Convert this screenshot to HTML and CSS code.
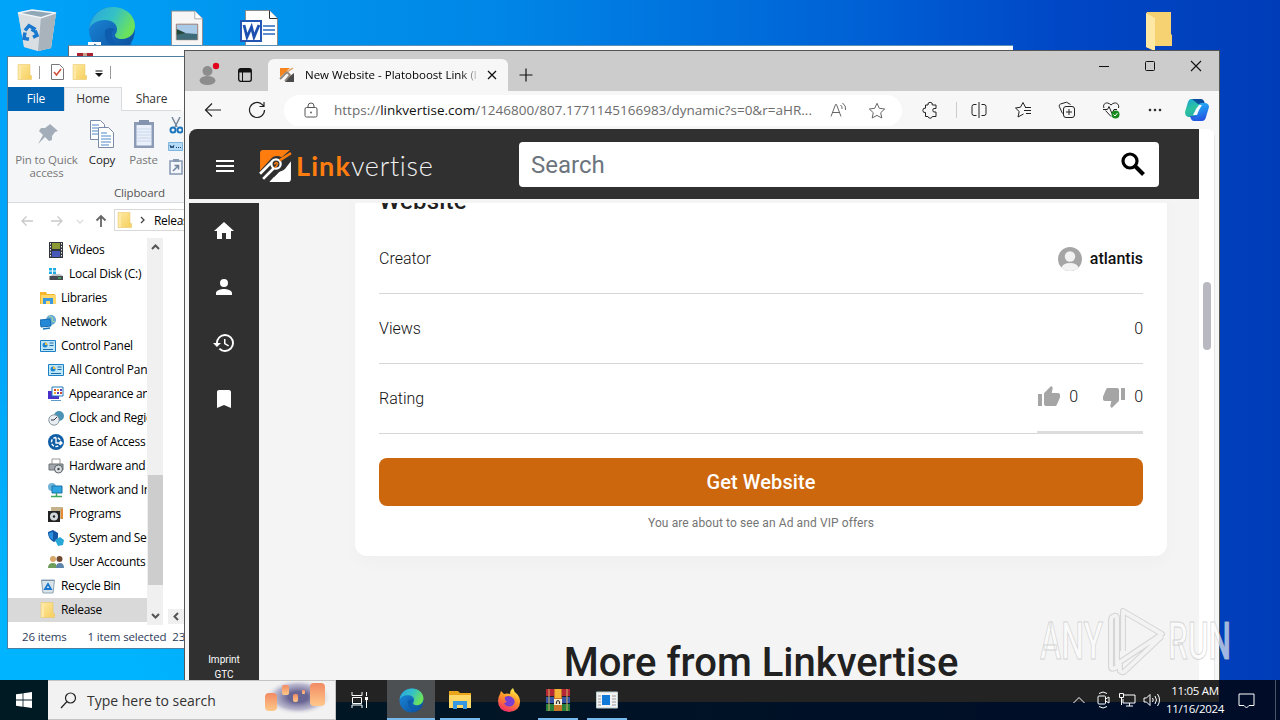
FILE: index.html
```html
<!DOCTYPE html>
<html lang="en">
<head>
    <meta charset="UTF-8">
    <meta name="viewport" content="width=device-width, initial-scale=1.0">
    <title>New Website - Platoboost Link</title>
    <link rel="stylesheet" href="styles.css">
</head>
<body>
    <svg class="defs" width="0" height="0">
        <defs>
            <linearGradient id="fold" x1="0" y1="0" x2="1" y2="1"><stop offset="0" stop-color="#ffe9a2"/><stop offset="1" stop-color="#f5cf5c"/></linearGradient>
            <linearGradient id="edgeTop" x1="0" y1="0" x2="1" y2="0.4"><stop offset="0" stop-color="#2aa5e0"/><stop offset="0.55" stop-color="#35c1c6"/><stop offset="1" stop-color="#6be25c"/></linearGradient>
            <linearGradient id="edgeLow" x1="0" y1="0" x2="1" y2="1"><stop offset="0" stop-color="#1b8de0"/><stop offset="1" stop-color="#0c4a96"/></linearGradient>
            <linearGradient id="fox" x1="0.7" y1="0" x2="0.3" y2="1"><stop offset="0" stop-color="#fff04a"/><stop offset="0.45" stop-color="#ff9328"/><stop offset="1" stop-color="#f0286a"/></linearGradient>
            <linearGradient id="cop1" x1="0" y1="0" x2="0.4" y2="1"><stop offset="0" stop-color="#1aa0d8"/><stop offset="0.6" stop-color="#2cc3a0"/><stop offset="1" stop-color="#2ab0a8"/></linearGradient>
            <linearGradient id="cop2" x1="0" y1="0" x2="0.3" y2="1"><stop offset="0" stop-color="#2cb5f5"/><stop offset="0.5" stop-color="#1f8cf0"/><stop offset="1" stop-color="#2456e0"/></linearGradient>
        </defs>
        <symbol id="folder" viewBox="0 0 16 16">
            <path d="M1 .5h12v11h1.500v4H1z" fill="url(#fold)"/>
            <path d="M1 .5l3 1.500v13.500H1z" fill="#ffe9a6"/>
            <path d="M1 .5h12v11h1.500v4H1z" fill="none" stroke="#e6c260" stroke-width=".5"/>
        </symbol>
        <symbol id="edge" viewBox="0 0 48 48">
            <circle cx="24" cy="24" r="23" fill="url(#edgeLow)"/>
            <path d="M1 23C3 9 13 1 25 1c13 0 22 9 22 19 0 8-6 13-13 13-5 0-7-2-7-4 0-1 2-2 2-6 0-5-5-9-12-9C9 14 3 18 1 23z" fill="url(#edgeTop)"/>
            <path d="M17 25c-1 9 5 17 14 18 5 0 9-1 13-6-9 4-18 1-20-5-1-4 0-7 3-9-4-2-9-1-10 2z" fill="#0d5cae"/>
        </symbol>
        <symbol id="linkv" viewBox="0 0 32 33">
            <path d="M1 4q0-3 3-3h26l-8 7q-6-3-10 1L1 21z" fill="#ff7d0f"/>
            <path d="M31 12v17q0 3-3 3H10l9-10q5 0 8-5z" fill="#fff"/>
            <path d="M1 24l12-12M4 29l11-11" stroke="#fff" stroke-width="2.600"/>
            <circle cx="16.500" cy="14.500" r="4.500" fill="#303030" stroke="#fff" stroke-width="2.200"/>
            <path d="M20 11l11-7" stroke="#ff7d0f" stroke-width="2.400"/>
            <path d="M15 15q1-3 3-1 0 2-3 4" fill="none" stroke="#ff7d0f" stroke-width="1.500"/>
            <path d="M14 27l9-9 8-9" fill="none" stroke="#303030" stroke-width="1.300"/>
        </symbol>
        <symbol id="panel" viewBox="0 0 16 16">
            <path d="M.5 2.500h15v11H.5z" fill="#bfe7fa" stroke="#1d7fc4"/>
            <circle cx="5" cy="7" r="2.500" fill="#1d86d0"/><path d="M5 7V4.500A2.500 2.500 0 0 1 7.500 7z" fill="#f7c33c"/>
            <path d="M9.500 5h4M9.500 7.500h4M3 11.500h10" stroke="#1e6aa5"/>
        </symbol>
        <symbol id="bin" viewBox="0 0 40 44">
            <path d="M1 4l14-3 24 3-5 36-13 3-14-4z" fill="#c6ced4"/>
            <path d="M1 4l20 5 18-5-5 36-13 3-14-4z" fill="#dde2e5" opacity=".8"/>
            <path d="M24 8l15-4-5 36-13 3z" fill="#a9b3bc"/>
            <path d="M1 4l14-3 24 3-15 5z" fill="#8fa7b7" stroke="#f1f4f6" stroke-width="1.500"/>
            <path d="M8 22l4-5 5 3-2 3M18 22l2 5-4 2M12 31l-5-1 1-6" fill="none" stroke="#1a78cf" stroke-width="3.500"/>
        </symbol>
    </svg>

    <div class="desktop">
        <svg class="desk-icon bin" viewBox="0 0 40 44" preserveAspectRatio="none"><use href="#bin"/></svg>
        <svg class="desk-icon edge" viewBox="0 0 48 48"><use href="#edge"/><path d="M0 36h13v12H0z" fill="#fff"/><path d="M4 45q0-4 5-5M6 38.500l3.500 1.500-2 3" fill="none" stroke="#1a66b8" stroke-width="1.500"/></svg>
        <svg class="desk-icon picture" viewBox="0 0 34 40">
            <path d="M.5.500h24l8 8V40H.5z" fill="#f6f6f6" stroke="#8c8c8c"/><path d="M24.500.500v8h8" fill="#fff" stroke="#aaa"/>
            <path d="M5.500 14h22v16h-22z" fill="#a9cbe8" stroke="#9b7c72"/><path d="M6 21l7 2 14 1v6H6z" fill="#3e6b78"/><path d="M6 19l9 4-9 2z" fill="#24483a"/>
        </svg>
        <svg class="desk-icon word" viewBox="0 0 38 40">
            <path d="M5.500.500h24l8 8V40h-32z" fill="#fff" stroke="#8c8c8c"/><path d="M29.500.500v8h8" fill="#fff" stroke="#333"/>
            <path d="M23 16h12M23 20h12M23 24h12" stroke="#2b6ac0" stroke-width="1.500"/>
            <path d="M1 11h20v20H1z" fill="#fff" stroke="#2255b4" stroke-width="2"/>
            <path d="M4 15l3 12 4.500-10L14 27l5-12" fill="none" stroke="#1d4fb0" stroke-width="2.800"/>
        </svg>
        <svg class="desk-icon files" viewBox="0 0 28 40"><path d="M2 0h24v22l1 1v11H10v5L1 35V2z" fill="#f6d272"/><path d="M1 1l9 5v33l-9-4z" fill="#ffe8a4"/></svg>

        <div class="window rar-window">
            <svg width="16" height="5" viewBox="0 0 16 5"><path d="M0 0h16v5H0z" fill="#a8232d"/><path d="M6 0h4v5H6z" fill="#c9a08b"/></svg>
        </div>

        <div class="window explorer">
            <div class="quick-bar">
                <svg width="16" height="16"><use href="#folder"/></svg>
                <i class="sep"></i>
                <svg class="check" width="13" height="16" viewBox="0 0 13 16"><path d="M.5.500h8l4 4v11H.5z" fill="#fff" stroke="#777"/><path d="M3 8l2.500 3L10 5" fill="none" stroke="#d0523a" stroke-width="1.600"/></svg>
                <svg width="16" height="16"><use href="#folder"/></svg>
                <svg class="caret" width="8" height="7" viewBox="0 0 8 7"><path d="M.5 1h7" stroke="#111"/><path d="M0 3h8L4 7z" fill="#111"/></svg>
                <i class="sep"></i>
            </div>
            <div class="tabs">
                <span class="file">File</span>
                <span class="home">Home</span>
                <span class="share">Share</span>
            </div>
            <div class="ribbon">
                <div class="tools">
                    <div class="tool pin">
                        <svg width="30" height="34" viewBox="0 0 30 34"><path d="M18 7l8 7-3 1-3 4 0 4-3 1-4-4-7 7 5-9-4-4 2-3 4 0 4-3z" fill="#a3acb9"/></svg>
                        <span>Pin to Quick<br>access</span>
                    </div>
                    <div class="tool copy">
                        <svg width="30" height="34" viewBox="0 0 30 34"><g fill="#fff" stroke="#7a8ba8"><path d="M3.500 3.500h10l4 4v15h-14z"/><path d="M11.500 10.500h10l5 5v15h-15z"/></g><path d="M5 8h7M5 11h6M5 14h6M5 17h6M14 16h6M14 19h10M14 22h10M14 25h10M14 28h8" stroke="#4d87c7"/></svg>
                        <span>Copy</span>
                    </div>
                    <div class="tool paste">
                        <svg width="30" height="34" viewBox="0 0 30 34"><path d="M5 5h20v26H5z" fill="#8b9bb6"/><path d="M7.500 8h15v20.500h-15z" fill="#eaf0f9"/><path d="M10 3h10v5H10z" fill="#8493ad"/><path d="M8 12h14M8 15h14M8 18h14M8 21h14M8 24h14" stroke="#c8d6ea"/></svg>
                        <span>Paste</span>
                    </div>
                    <div class="small-tools">
                        <svg width="14" height="17" viewBox="0 0 14 17"><path d="M3 0l5 10M11 0L6 10" stroke="#76889d" stroke-width="1.500"/><circle cx="4" cy="13" r="2.500" fill="none" stroke="#1d76bd" stroke-width="2"/><circle cx="11" cy="13" r="2.500" fill="none" stroke="#1d76bd" stroke-width="2"/></svg>
                        <svg width="15" height="9" viewBox="0 0 15 9"><path d="M.5.500h14v8H.5z" fill="#b4dcf8" stroke="#7fb4dd"/><path d="M2 3l1 3 1-2 1 2 1-3M8 5.500h1M10 5.500h1M12 5.500h1" fill="none" stroke="#1b4770"/></svg>
                        <svg width="14" height="16" viewBox="0 0 14 16"><path d="M1 2h12v13H1z" fill="#f3f6fa" stroke="#8798b2" stroke-width="1.500"/><path d="M4 0h6v3H4z" fill="#8798b2"/><path d="M4 12l5-5M5.500 6.500H9.500v4" fill="none" stroke="#72849d" stroke-width="1.500"/></svg>
                    </div>
                </div>
                <div class="group-name">Clipboard</div>
            </div>
            <div class="address">
                <svg width="72" height="14" viewBox="0 0 72 14" fill="none" stroke="#c9c9c9" stroke-width="1.300"><path d="M13 7H2M6.500 2.500L2 7l4.500 4.500M31 7h11M37.500 2.500L42 7l-4.500 4.500"/><path d="M57 6l3 3 3-3" stroke="#ddd"/></svg>
                <svg class="up" width="12" height="14" viewBox="0 0 12 14"><path d="M6 13V2M1.500 6.500L6 2l4.500 4.500" fill="none" stroke="#666" stroke-width="1.800"/></svg>
                <div class="path">
                    <svg width="16" height="16"><use href="#folder"/></svg>
                    <svg class="chev" width="5" height="8" viewBox="0 0 5 8"><path d="M1 1l3 3-3 3" fill="none" stroke="#444" stroke-width="1.300"/></svg>
                    <span>Release</span>
                </div>
            </div>
            <div class="explorer-main">
                <ul class="tree">
                    <li class="sub"><svg viewBox="0 0 16 16"><path d="M1 0h14v16H1z" fill="#30343b"/><path d="M4 1h8v6H4z" fill="#8b9a35"/><path d="M4 9h8v6H4z" fill="#4858b8"/><path d="M2.500 1v14M13.500 1v14" stroke="#eee" stroke-dasharray="1.500 1.500"/></svg><span>Videos</span></li>
                    <li class="sub"><svg viewBox="0 0 16 16"><path d="M1 2h3v2.500H1zM5 2h3v2.500H5zM1 5.500h3V8H1zM5 5.500h3V8H5z" fill="#19abe2"/><path d="M2 10l3-2h7l3 2z" fill="#bcc3c7"/><path d="M1.500 10H15v4H1.500z" fill="#454b50"/><path d="M10 12h3" stroke="#4be06f"/></svg><span>Local Disk (C:)</span></li>
                    <li><svg viewBox="0 0 16 16"><path d="M0 2h6l1 2h8v10H0z" fill="#f5b62c"/><path d="M1 5h15v9H1z" fill="#ffd76b"/><path d="M3 14V8h10v6h-3v-3H6v3z" fill="#3b9ade"/></svg><span>Libraries</span></li>
                    <li><svg viewBox="0 0 16 16"><circle cx="11" cy="6" r="5" fill="#63a9d3"/><path d="M9 2l4 2-1 3 3 1" stroke="#a9d7a0" fill="none"/><path d="M0 6l10-1 1 7-10 1z" fill="#2589d7" stroke="#146bae"/><path d="M3 15l7-1" stroke="#1a75ba" stroke-width="1.500"/></svg><span>Network</span></li>
                    <li><svg><use href="#panel"/></svg><span>Control Panel</span></li>
                    <li class="sub"><svg><use href="#panel"/></svg><span>All Control Panel Items</span></li>
                    <li class="sub"><svg viewBox="0 0 16 16"><path d="M0 5h11v8H0z" fill="#4731c8"/><path d="M4 1h11v9H4z" fill="#fff" stroke="#2179bc"/><path d="M6 3h2v2H6zM12 6h2v2h-2z" fill="#d4432c"/><path d="M9 3h2v2H9zM6 6h2v2H6z" fill="#f3a52c"/><path d="M12 3h2v2h-2zM9 6h2v2H9z" fill="#5d3bb6"/><path d="M3 14.500h10" stroke="#5d9acb"/></svg><span>Appearance and Personalization</span></li>
                    <li class="sub"><svg viewBox="0 0 16 16"><circle cx="11" cy="6" r="5" fill="#4b93b6"/><circle cx="6" cy="10" r="5.200" fill="#e7edf0" stroke="#8a98a2"/><path d="M6 10l3-3M6 10H3" stroke="#334"/></svg><span>Clock and Region</span></li>
                    <li class="sub"><svg viewBox="0 0 16 16"><circle cx="8" cy="8" r="8" fill="#0f5ea6"/><circle cx="8" cy="8" r="4.500" fill="none" stroke="#fff" stroke-width="1.500" stroke-dasharray="3 1.500"/><path d="M8 4v5h6M12 7l2 2-2 2" fill="none" stroke="#fff" stroke-width="1.300"/></svg><span>Ease of Access</span></li>
                    <li class="sub"><svg viewBox="0 0 16 16"><path d="M4 1h8v6H4z" fill="#fff" stroke="#999"/><path d="M1 6h14v6H1z" fill="#a0a6ab" stroke="#6a7278"/><circle cx="10.500" cy="11" r="4" fill="#d9dee1" stroke="#596066"/><circle cx="10.500" cy="11" r="1.200" fill="#444"/></svg><span>Hardware and Sound</span></li>
                    <li class="sub"><svg viewBox="0 0 16 16"><circle cx="4" cy="5" r="4" fill="#6fb4d8"/><path d="M4 4h10v7H4z" fill="#2fa6e2" stroke="#1971a8"/><path d="M3 14.500h11M8.500 11v3" stroke="#3da85c" stroke-width="1.500"/></svg><span>Network and Internet</span></li>
                    <li class="sub"><svg viewBox="0 0 16 16"><path d="M3 1h12v12H3z" fill="#c4b28c"/><path d="M13 3h2v10h-2z" fill="#e48a35"/><path d="M0 5h12v11H0z" fill="#222"/><circle cx="6" cy="10.500" r="4" fill="#d3d8db"/><circle cx="6" cy="10.500" r="1.200" fill="#222"/></svg><span>Programs</span></li>
                    <li class="sub"><svg viewBox="0 0 16 16"><path d="M0 2l5-2 5 3v4c0 3-2 4-4 5C2 10 0 7 0 2z" fill="#1458a8"/><path d="M1 3l4-1v8C2 8 1 7 1 3z" fill="#2b91df"/><path d="M7 10l5-3 4 3-1 5-5 1z" fill="#29a7d6"/></svg><span>System and Security</span></li>
                    <li class="sub"><svg viewBox="0 0 16 16"><circle cx="5" cy="5" r="3" fill="#d8a667"/><circle cx="11.500" cy="5" r="3" fill="#70482e"/><path d="M0 14q0-5 5-5 4 0 4 5z" fill="#6d9d58"/><path d="M8 14q0-5 4-5t4 5z" fill="#5d84ab"/></svg><span>User Accounts</span></li>
                    <li><svg viewBox="0 0 16 16"><path d="M1.500 2h13L13 15H3z" fill="#d9e3ea" stroke="#8ea3b2"/><path d="M2 2.500h12" stroke="#7b93a5"/><path d="M5 11l3-5 3 5z" fill="none" stroke="#1a78cf" stroke-width="1.800"/></svg><span>Recycle Bin</span></li>
                    <li class="selected"><svg><use href="#folder"/></svg><span>Release</span></li>
                </ul>
                <div class="tree-scroll">
                    <svg width="9" height="6" viewBox="0 0 9 6"><path d="M1 5l3.500-3.500L8 5" fill="none" stroke="#555" stroke-width="2"/></svg>
                    <div class="thumb"></div>
                    <svg width="9" height="6" viewBox="0 0 9 6"><path d="M1 1l3.500 3.500L8 1" fill="none" stroke="#555" stroke-width="2"/></svg>
                </div>
                <div class="list-pane"><svg width="16" height="15" viewBox="0 0 16 15"><path d="M0 0h16v15H0z" fill="#f0f0f0"/><path d="M10 4L6.500 7.500 10 11" fill="none" stroke="#555" stroke-width="2"/></svg></div>
            </div>
            <div class="status"><span>26 items</span><span>1 item selected</span><span>23</span></div>
        </div>

        <div class="window browser">
            <div class="tab-strip">
                <svg class="profile" width="22" height="24" viewBox="0 0 22 24"><circle cx="9.500" cy="9" r="5" fill="#8d8d8d"/><ellipse cx="9.500" cy="18.500" rx="8" ry="4.500" fill="#8d8d8d"/><circle cx="18" cy="4" r="3.200" fill="#e3001b"/></svg>
                <svg class="tab-menu" width="14" height="14" viewBox="0 0 14 14"><rect x=".7" y=".7" width="12.600" height="12.600" rx="2" fill="none" stroke="#111" stroke-width="1.300"/><path d="M1 1h12v3.500H1z" fill="#111"/><path d="M4.500 4v9" stroke="#111"/></svg>
                <div class="tab">
                    <svg width="16" height="16" viewBox="0 0 16 16"><path d="M1 1h10L7 5 1 10z" fill="#f5861f"/><path d="M15 6v9H6l4-5z" fill="#4a4a4a"/><path d="M1 12l7-7 3 3-5 6" fill="none" stroke="#8f8378" stroke-width="1.800"/><path d="M8 5l6-4" stroke="#d9a067" stroke-width="1.500"/></svg>
                    <span>New Website - Platoboost Link (l</span>
                    <svg width="10" height="10" viewBox="0 0 10 10"><path d="M1 1l8 8M9 1L1 9" stroke="#111" stroke-width="1.300"/></svg>
                </div>
                <svg class="plus" width="14" height="14" viewBox="0 0 14 14"><path d="M7 .500v13M.5 7h13" stroke="#111" stroke-width="1.200"/></svg>
                <div class="win-buttons">
                    <svg width="12" height="12" viewBox="0 0 12 12"><path d="M1 6.500h10" stroke="#111"/></svg>
                    <svg width="12" height="12" viewBox="0 0 12 12"><rect x="1.500" y="1.500" width="9" height="9" rx="1" fill="none" stroke="#111"/></svg>
                    <svg width="12" height="12" viewBox="0 0 12 12"><path d="M1 1l10 10M11 1L1 11" stroke="#111" stroke-width="1.100"/></svg>
                </div>
            </div>
            <div class="toolbar">
                <svg class="back" width="18" height="16" viewBox="0 0 18 16"><path d="M17 8H1.500M8 1.500L1.500 8 8 14.500" fill="none" stroke="#222" stroke-width="1.200"/></svg>
                <svg class="reload" width="18" height="18" viewBox="0 0 18 18"><path d="M16.500 9a7.500 7.500 0 1 1-2.500-5.600L16 5.500M16 1v4.500h-4.500" fill="none" stroke="#222" stroke-width="1.200"/></svg>
                <div class="url-bar">
                    <svg width="14" height="16" viewBox="0 0 14 16"><rect x="1" y="5.500" width="12" height="9.500" rx="1.500" fill="none" stroke="#555"/><path d="M4 5.500V4a3 3 0 0 1 6 0v1.500" fill="none" stroke="#555"/><circle cx="7" cy="10.500" r=".9" fill="#555"/></svg>
                    <span class="url">https://<b>linkvertise.com</b>/1246800/807.1771145166983/dynamic?s=0&amp;r=aHR...</span>
                    <svg class="read" width="17" height="16" viewBox="0 0 17 16"><path d="M1 14.500L5.500 2.500h1L11 14.500M2.700 10.500h6.600M10.500 3q2 1.500 1.500 4M12.500 1q4 3 3 7" fill="none" stroke="#666"/></svg>
                    <svg width="18" height="17" viewBox="0 0 18 17"><path d="M9 1.300l2.300 5 5.400.7-4 3.700 1.100 5.300L9 13.400 4.200 16l1.100-5.300-4-3.700 5.400-.7z" fill="none" stroke="#666" stroke-linejoin="round"/></svg>
                </div>
                <div class="actions">
                    <svg width="18" height="18" viewBox="0 0 18 18"><path d="M4.500 4H7a2.200 2.200 0 1 1 4.300 0H15v3.500h-1a1.800 1.800 0 1 0 0 3.500h1v4.500h-3.700a2.200 2.200 0 0 1-4.300 0H4.500V11.500a2.200 2.200 0 1 1 0-4.300z"/></svg>
                    <i class="bar"></i>
                    <svg width="18" height="18" viewBox="0 0 18 18"><path d="M9 1v16M6.500 3.500H4a2 2 0 0 0-2 2v7a2 2 0 0 0 2 2h2.500M11.500 3.500H14a2 2 0 0 1 2 2v7a2 2 0 0 1-2 2h-2.500"/></svg>
                    <svg width="18" height="18" viewBox="0 0 18 18"><path d="M9.500 13L4 16l1.200-5.500L1.500 7 6.500 6.200 9 1.500l2.500 4.800M11 6.500h6M10 9.500h7M12 12.500h5"/></svg>
                    <svg width="18" height="18" viewBox="0 0 18 18"><path d="M4.500 12.500L1.300 5.500a2 2 0 0 1 1.200-2.500l6-1.800 4 2.300"/><rect x="5.500" y="5.500" width="11" height="11" rx="2.500"/><path d="M11 8v6M8 11h6"/></svg>
                    <svg width="18" height="18" viewBox="0 0 18 18"><path d="M2 7C.5 4 3 1.500 5.500 2 7 2.200 8 3 9 4c1-1 2-1.800 3.500-2C15 1.500 17.500 4 16.500 7M3.500 9.500l5.500 6M1 8.500h4.500L7 5.500l3 7 2-4h3"/><circle cx="13.500" cy="13.500" r="4" fill="#168a1c" stroke="none"/><path d="M11.500 13.500l1.500 1.500 2.500-3" stroke="#fff"/></svg>
                    <svg class="dots" width="18" height="18" viewBox="0 0 18 18"><circle cx="4" cy="9" r=".9"/><circle cx="9" cy="9" r=".9"/><circle cx="14" cy="9" r=".9"/></svg>
                    <svg class="copilot" width="24" height="24" viewBox="0 0 24 24"><path d="M6 1h10l-1 3-4 12q-1 3-4 3H3Q0 18 0 14l3-10q1-3 3-3z" fill="url(#cop1)"/><path d="M7 1h9q2 0 3 2l1 3h-7z" fill="#0b4f9c"/><path d="M21 5q3 1 3 4l-3 10q-1 4-4 4H8l1-3 4-12q1-3 4-3z" fill="url(#cop2)"/><path d="M5 18h6l-2 5q-3 0-4-5z" fill="#2a60e0"/><path d="M14 7h3l-3 5-2 5H8l3-6z" fill="#f5fbff"/></svg>
                </div>
            </div>
            <div class="viewport">
                <div class="page">
                    <header class="site-header">
                        <svg class="burger" width="18" height="12" viewBox="0 0 18 12"><path d="M0 1h18M0 6h18M0 11h18" stroke="#fff" stroke-width="2"/></svg>
                        <div class="logo">
                            <svg width="33" height="34"><use href="#linkv"/></svg>
                            <span class="link">Link</span><span class="vertise">vertise</span>
                        </div>
                        <div class="search">
                            <span>Search</span>
                            <svg width="24" height="24" viewBox="0 0 24 24"><circle cx="9" cy="9" r="7" fill="none" stroke="#000" stroke-width="3.200"/><path d="M14 14l8.500 8.500" stroke="#000" stroke-width="4"/></svg>
                        </div>
                    </header>
                    <div class="site-body">
                        <nav class="side">
                            <svg viewBox="0 0 24 24"><path d="M10 20v-6h4v6h5v-8h3L12 3 2 12h3v8z"/></svg>
                            <svg viewBox="0 0 24 24"><path d="M12 12a4 4 0 1 0 0-8 4 4 0 0 0 0 8zm0 2c-2.670 0-8 1.340-8 4v2h16v-2c0-2.660-5.330-4-8-4z"/></svg>
                            <svg viewBox="0 0 24 24"><path d="M13 3a9 9 0 0 0-9 9H1l3.890 3.890.070.140L9 12H6c0-3.870 3.130-7 7-7s7 3.130 7 7-3.130 7-7 7c-1.930 0-3.680-.79-4.940-2.060l-1.420 1.420A8.950 8.950 0 0 0 13 21a9 9 0 0 0 0-18zm-1 5v5l4.280 2.540.72-1.210-3.500-2.080V8H12z"/></svg>
                            <svg viewBox="0 0 24 24"><path d="M17 3H7c-1.100 0-1.990.9-1.990 2L5 21l7-3 7 3V5c0-1.100-.9-2-2-2z"/></svg>
                            <div class="legal">Imprint<br>GTC</div>
                        </nav>
                        <main class="content">
                            <section class="card">
                                <h2>Website</h2>
                                <div class="info"><span>Creator</span>
                                    <div class="creator"><svg width="24" height="24" viewBox="0 0 24 24"><circle cx="12" cy="12" r="12" fill="#a5a5a5"/><path d="M3.500 20.500Q5 16 12 16t8.500 4.500Q17 24 12 24t-8.500-3.500z" fill="#f2f2f2"/><circle cx="12" cy="9.500" r="5.200" fill="#f2f2f2"/></svg><strong>atlantis</strong></div>
                                </div>
                                <div class="info"><span>Views</span><span>0</span></div>
                                <div class="info"><span>Rating</span>
                                    <div class="votes">
                                        <svg viewBox="0 0 24 24"><path d="M1 21h4V9H1v12zm22-11c0-1.100-.9-2-2-2h-6.310l.95-4.570.030-.32c0-.41-.17-.79-.44-1.060L14.170 1 7.590 7.590C7.220 7.950 7 8.450 7 9v10c0 1.100.9 2 2 2h9c.83 0 1.540-.5 1.840-1.220l3.020-7.050c.09-.23.14-.47.14-.73v-2z"/></svg><span>0</span>
                                        <svg class="down" viewBox="0 0 24 24"><path d="M15 3H6c-.83 0-1.540.5-1.840 1.220l-3.020 7.050c-.09.23-.14.47-.14.73v2c0 1.100.9 2 2 2h6.310l-.95 4.570-.03.32c0 .41.17.79.44 1.060L9.830 23l6.590-6.590c.36-.36.58-.86.58-1.410V5c0-1.100-.9-2-2-2zm4 0v12h4V3h-4z"/></svg><span>0</span>
                                    </div>
                                </div>
                                <button class="get">Get Website</button>
                                <p class="note">You are about to see an Ad and VIP offers</p>
                            </section>
                            <h1>More from Linkvertise</h1>
                        </main>
                    </div>
                </div>
                <div class="page-scroll"><div class="page-thumb"></div></div>
            </div>
        </div>

        <svg class="watermark" width="200" height="70" viewBox="0 0 200 70">
            <g fill="#fff" fill-opacity=".65" stroke="#c4c4c4" stroke-opacity=".7" stroke-width="1" font-family="Roboto, sans-serif" font-size="51" font-weight="500">
                <text x="4" y="52" textLength="63" lengthAdjust="spacingAndGlyphs">ANY</text>
                <text x="132" y="52" textLength="63" lengthAdjust="spacingAndGlyphs">RUN</text>
            </g>
            <g fill="none" stroke-linejoin="round">
                <path d="M87 44V4l39 23-45 30V11q0-3-3-2-3 1-3 4v47q0 3 4 1l5-3v6q3 3 6-1l36-34" stroke="#c2c2c2" stroke-opacity=".6" stroke-width="6"/>
                <path d="M87 44V4l39 23-45 30V11q0-3-3-2-3 1-3 4v47q0 3 4 1l5-3v6q3 3 6-1l36-34" stroke="#fff" stroke-opacity=".7" stroke-width="3.800"/>
            </g>
        </svg>

        <div class="taskbar">
            <div class="start"><svg width="16" height="16" viewBox="0 0 16 16"><path d="M0 2.300l6.600-.9v6.200H0zM7.400 1.300L16 0v7.600H7.400zM0 8.400h6.600v6.300L0 13.800zM7.400 8.400H16V16l-8.600-1.200z" fill="#fff"/></svg></div>
            <div class="find">
                <svg width="17" height="17" viewBox="0 0 17 17"><circle cx="10.500" cy="6" r="5" fill="none" stroke="#222" stroke-width="1.200"/><path d="M7 9.500L1 16" stroke="#222" stroke-width="1.200"/></svg>
                <span>Type here to search</span>
                <svg class="lanterns" width="72" height="38" viewBox="0 0 72 38">
                    <defs><radialGradient id="dusk"><stop offset=".3" stop-color="#6a6694"/><stop offset=".7" stop-color="#a5a2c0" stop-opacity=".75"/><stop offset="1" stop-color="#f2f2f2" stop-opacity="0"/></radialGradient><linearGradient id="lamp" x2="0" y2="1"><stop offset="0" stop-color="#f28a63"/><stop offset="1" stop-color="#ffc98a"/></linearGradient></defs>
                    <ellipse cx="36" cy="16" rx="33" ry="18" fill="url(#dusk)"/>
                    <g fill="url(#lamp)"><rect x="3" y="12" width="12" height="18" rx="4"/><rect x="20" y="4" width="7" height="10" rx="2"/><rect x="31" y="13" width="5" height="8" rx="2"/><rect x="40" y="9" width="3" height="4" rx="1"/><rect x="48" y="2" width="15" height="23" rx="4"/></g>
                </svg>
            </div>
            <div class="apps">
                <div class="app view"><svg width="18" height="16" viewBox="0 0 18 16" fill="none" stroke="#fff"><path d="M1 0v3.500h10V0M1.500 5.500h9v6h-9zM1 16v-3h10v3M15.500 0v4M15.500 8v8"/><path d="M14 5h3v3h-3z" fill="#fff" stroke="none"/></svg></div>
                <div class="app active"><svg width="25" height="25"><use href="#edge"/></svg></div>
                <div class="app open"><svg width="22" height="20" viewBox="0 0 22 20"><path d="M0 1h9l2 2h11v15H0z" fill="#e9a51b"/><path d="M0 5h22v13H0z" fill="#ffd767"/><path d="M4 19v-8h14v8h-4v-4H8v4z" fill="#3598e0"/></svg></div>
                <div class="app"><svg width="24" height="24" viewBox="0 0 24 24"><path d="M3 6l1-3 3 3q3-1 6 0 0-4 3-6 1 4 4 6 3 3 3 8 0 9-11 10Q1 23 1 13q0-4 2-7z" fill="url(#fox)"/><path d="M8 9q5-3 9 2 2 5-2 7-6 2-8-3l3-1q-3-2-2-5z" fill="#7a3fd0"/></svg></div>
                <div class="app open"><svg width="24" height="24" viewBox="0 0 24 24"><path d="M0 1h24v7H0z" fill="#b52637"/><path d="M0 9h24v6H0z" fill="#3656a5"/><path d="M0 16h24v7H0z" fill="#29803b"/><path d="M8 1h8v22H8z" fill="#c9762b"/><path d="M9 1h6v9H9z" fill="#f4b43a"/><path d="M8 11h8v6H8z" fill="#f6ecd2"/><path d="M10.500 16v-2q1.500-3 3 0v2" fill="none" stroke="#333" stroke-width="1.200"/><path d="M3 1v22M21 1v22" stroke="#d8b36b"/></svg></div>
                <div class="app open"><svg width="22" height="18" viewBox="0 0 22 18"><path d="M.5 1h21v16H.5z" fill="#f3f3f3" stroke="#bcc"/><path d="M6 4h8v10H6z" fill="#1179d8"/><path d="M2 5h3M2 8h3M2 11h3M2 14h3M16 5h4M16 8h4M16 11h4M16 14h4" stroke="#999"/></svg></div>
            </div>
            <div class="tray">
                <svg width="12" height="8" viewBox="0 0 12 8"><path d="M.5 7L6 1.500 11.500 7" /></svg>
                <svg class="cam" width="13" height="18" viewBox="0 0 13 18"><rect x="1" y="5" width="7.500" height="8" rx="1"/><path d="M8.500 8L12 6v6l-3.500-2M2 2.500q4-3 8 0M2 15.500q4 3 8 0"/></svg>
                <svg class="net" width="17" height="14" viewBox="0 0 17 14"><path d="M5 2h11v8H4V6M7 13h7M10.500 10v3M.5.500h4v4h-4zM2.500 4.500V12"/></svg>
                <svg class="vol" width="18" height="14" viewBox="0 0 18 14"><path d="M1 5h2.500L7 1.500v11L3.500 9H1zM9.500 5q1.500 2 0 4M12 3q3 4 0 8M14.500 1q4 6 0 12"/></svg>
                <div class="clock">11:05 AM<br>11/16/2024</div>
                <svg class="note-icon" width="17" height="17" viewBox="0 0 17 17"><path d="M1 1h15v11.500h-5L8.500 15 6 12.500H1z"/></svg>
                <i class="peek"></i>
            </div>
        </div>
    </div>
</body>
</html>
```

FILE: styles.css
```css
* {
    box-sizing: border-box;
}
body {
    margin: 0;
    font-family: 'Open Sans', 'Noto Sans', sans-serif;
    font-size: 12px;
    color: #000;
}
svg {
    flex: none;
    display: block;
}
.defs {
    position: absolute;
}
.desktop {
    position: relative;
    width: 1280px;
    height: 720px;
    overflow: hidden;
    background: radial-gradient(ellipse 500px 400px at 0 100%, #00b4ff 30%, transparent), linear-gradient(90deg, #00a5fa 0, #0098f0 200px, #0086e6 500px, #0062d6 850px, #0047c6 1060px, #003cb8 1280px);
}

/* desktop icons */
.desk-icon {
    position: absolute;
}
.bin { left: 17px; top: 9px; width: 40px; height: 43px; }
.edge { left: 88px; top: 6px; width: 48px; height: 48px; }
.picture { left: 171px; top: 10px; width: 33px; height: 40px; }
.word { left: 240px; top: 10px; width: 38px; height: 40px; }
.files { left: 1145px; top: 12px; width: 28px; height: 40px; }

.window {
    position: absolute;
    background: #fff;
}
.rar-window {
    left: 68px;
    top: 45px;
    width: 945px;
    height: 500px;
    padding: 7px 8px;
    border-left: 1px solid #5b6b78;
    border-top: 1px solid #5b8fb5;
}

/* file explorer */
.explorer {
    left: 7px;
    top: 56px;
    width: 400px;
    height: 593px;
    border: 1px solid #4f7f9f;
    display: flex;
    flex-direction: column;
}
.quick-bar {
    height: 30px;
    display: flex;
    align-items: center;
    padding-left: 9px;
}
.sep {
    width: 1px;
    height: 13px;
    margin: 0 11px 0 6px;
    background: #999;
}
.quick-bar .check { margin-right: 8px; }
.quick-bar .caret { margin: 3px 0 0 7px; }
.quick-bar .caret + .sep { margin-left: 7px; }
.tabs {
    height: 24px;
    display: flex;
    line-height: 24px;
    letter-spacing: -0.15px;
}
.tabs span {
    text-align: center;
    border-bottom: 1px solid #dadbdc;
    color: #333;
}
.tabs .file {
    width: 56px;
    background: #0063b1;
    color: #fff;
    border: none;
}
.tabs .home {
    width: 58px;
    background: #f5f6f7;
    border: 1px solid #dadbdc;
    border-bottom: none;
    line-height: 22px;
}
.tabs .share { width: 59px; }
.ribbon {
    height: 92px;
    background: #f5f6f7;
    border-bottom: 1px solid #dadbdc;
}
.tools {
    display: flex;
    height: 74px;
    padding-top: 6px;
}
.tool {
    display: flex;
    flex-direction: column;
    align-items: center;
    text-align: center;
    line-height: 13px;
    font-size: 11.5px;
    letter-spacing: -0.15px;
    color: #777;
}
.tool span {
    margin-top: 2px;
    white-space: nowrap;
}
.pin { width: 77px; }
.copy { width: 34px; color: #222; }
.paste { width: 49px; }
.small-tools {
    display: flex;
    flex-direction: column;
    gap: 8px;
    align-items: center;
}
.group-name {
    padding-left: 106px;
    font-size: 11.5px;
    line-height: 16px;
    color: #555;
    letter-spacing: -0.15px;
}
.address {
    height: 35px;
    display: flex;
    align-items: center;
    padding-left: 12px;
}
.up { margin-left: 3px; }
.path {
    display: flex;
    align-items: center;
    width: 250px;
    height: 22px;
    margin: -1px 0 0 7px;
    padding-left: 2px;
    border: 1px solid #d9d9d9;
}
.path .chev { margin: 0 9px 0 7px; }
.path span { letter-spacing: -0.3px; }
.explorer-main {
    flex: 1;
    display: flex;
    min-height: 0;
}
.tree {
    width: 139px;
    margin: 0;
    padding: 0;
    list-style: none;
    overflow: hidden;
}
.tree li {
    display: flex;
    align-items: center;
    gap: 5px;
    height: 24px;
    padding-left: 32px;
    white-space: nowrap;
    letter-spacing: -0.3px;
}
.tree li span {
    padding-bottom: 2px;
}
.tree svg {
    width: 16px;
    height: 16px;
}
.tree .sub { padding-left: 40px; }
.tree .selected { background: #d9d9d9; }
.tree-scroll {
    display: flex;
    flex-direction: column;
    align-items: center;
    width: 16px;
    height: 387px;
    padding: 6px 0;
    background: #f0f0f0;
}
.tree-scroll .thumb {
    width: 15px;
    height: 110px;
    margin: 225px 0 28px;
    background: #cdcdcd;
}
.list-pane {
    display: flex;
    align-items: flex-end;
    padding-left: 5px;
}
.status {
    display: flex;
    height: 24px;
    align-items: center;
    padding-left: 14px;
    color: #2d3b5a;
    font-size: 11.5px;
    letter-spacing: -0.15px;
}
.status span:nth-child(2) { margin: 0 6px 0 21px; }

/* browser window */
.browser {
    left: 184px;
    top: 50px;
    width: 1036px;
    height: 680px;
    background: #f7f7f7;
    border: 1px solid #555;
}
.tab-strip {
    display: flex;
    align-items: center;
    height: 40px;
    padding-top: 8px;
    background: #cccccc;
}
.profile { margin: -3px 0 0 13px; }
.tab-menu { margin-left: 18px; }
.tab {
    display: flex;
    align-items: center;
    align-self: stretch;
    width: 240px;
    margin-left: 16px;
    padding-left: 11px;
    background: #f7f7f7;
    border-radius: 6px 6px 0 0;
}
.tab span {
    width: 175px;
    margin: -2px 7px 0 10px;
    overflow: hidden;
    white-space: nowrap;
    font-size: 11.5px;
    -webkit-mask-image: linear-gradient(90deg, #000 155px, transparent 176px);
}
.plus { margin-left: 11px; }
.win-buttons {
    display: flex;
    gap: 34px;
    margin: -18px 17px 0 auto;
}
.toolbar {
    display: flex;
    align-items: center;
    height: 38px;
}
.back { margin-left: 19px; }
.reload { margin-left: 26px; }
.url-bar {
    display: flex;
    align-items: center;
    width: 618px;
    height: 31px;
    margin-left: 18px;
    padding-left: 20px;
    background: #fff;
    border-radius: 16px;
}
.url {
    width: 480px;
    margin: 0 16px 0 16px;
    white-space: nowrap;
    font-size: 13.5px;
    letter-spacing: 0.01px;
    color: #6c6c6c;
}
.url b {
    font-weight: normal;
    color: #111;
}
.read { margin-right: 21px; }
.actions {
    display: flex;
    align-items: center;
    margin-left: 19px;
    fill: none;
    stroke: #222;
}
.actions svg { margin-right: 26px; }
.actions svg:first-child { margin-right: 17px; }
.bar {
    width: 1px;
    height: 16px;
    margin-right: 13px;
    background: #ccc;
}
.actions .dots { fill: #222; margin-right: 21px; }
.actions .copilot { stroke: none; margin: 0; }

/* web page */
.viewport {
    display: flex;
    width: 1026px;
    height: 552px;
    margin-left: 4px;
    border-radius: 8px 8px 0 0;
    overflow: hidden;
    background: #fff;
    font-family: Roboto, sans-serif;
}
.page {
    width: 1010px;
    display: flex;
    flex-direction: column;
    background: #f4f4f4;
}
.site-header {
    display: flex;
    align-items: center;
    height: 70px;
    flex: none;
    margin-bottom: 4px;
    background: #303030;
}
.burger { margin: 4px 0 0 27px; }
.logo {
    display: flex;
    align-items: center;
    width: 260px;
    margin: 3px 0 0 25px;
    font-family: Lato, sans-serif;
    font-size: 27px;
    line-height: 30px;
}
.link {
    margin-left: 4px;
    font-weight: 700;
    color: #ff7d0f;
    letter-spacing: 1.1px;
}
.vertise {
    font-weight: 300;
    color: #f1f1f1;
    letter-spacing: 0.7px;
}
.search {
    display: flex;
    justify-content: space-between;
    align-items: center;
    width: 640px;
    height: 45px;
    padding: 0 14px 0 12px;
    background: #fff;
    border-radius: 4px;
    font-size: 24px;
    color: #6c757d;
}
.search span { padding-top: 2px; }
.site-body {
    display: flex;
    flex: 1;
    min-height: 0;
}
.side {
    display: flex;
    flex-direction: column;
    align-items: center;
    width: 70px;
    padding-top: 16px;
    background: #303030;
    fill: #fff;
}
.side svg {
    width: 24px;
    height: 24px;
    margin-bottom: 32px;
}
.legal {
    margin-top: 209px;
    color: #fff;
    font-size: 10px;
    line-height: 15px;
    text-align: center;
}
.content {
    width: 852px;
    margin-left: 76px;
    padding: 0 20px;
    overflow: hidden;
    color: #212121;
}
.card {
    height: 370px;
    padding: 0 24px;
    background: #fff;
    border-radius: 0 0 12px 12px;
    box-shadow: 0 8px 16px rgba(0, 0, 0, 0.02);
}
.card h2 {
    margin: -17px 0 0;
    height: 38px;
    font-size: 24px;
    line-height: 30px;
    font-weight: 500;
    letter-spacing: 0.2px;
}
.info {
    display: flex;
    justify-content: space-between;
    align-items: center;
    height: 70px;
    border-bottom: 1px solid #d6d6d6;
    font-size: 16px;
    font-weight: 300;
    color: #111;
}
.creator {
    display: flex;
    align-items: center;
    gap: 8px;
}
.creator strong { font-weight: 500; }
.votes {
    display: flex;
    align-items: center;
    height: 70px;
    margin-bottom: -1px;
    padding-bottom: 2px;
    border-bottom: 3px solid #dcdcdc;
    fill: #a5a5a5;
}
.votes svg {
    width: 24px;
    height: 24px;
    margin-right: 8px;
}
.votes .down { margin-left: 24px; }
.get {
    display: block;
    width: 764px;
    height: 48px;
    margin-top: 24px;
    border: none;
    border-radius: 8px;
    background: #cc670e;
    color: #fff;
    font: 500 20px Roboto, sans-serif;
    letter-spacing: 0.1px;
}
.note {
    margin: 9px 0 0;
    text-align: center;
    font-size: 12px;
    line-height: 16px;
    letter-spacing: 0.1px;
    color: #757575;
}
.content h1 {
    margin: 82px 0 0;
    text-align: center;
    font-size: 40px;
    line-height: 50px;
    font-weight: 500;
}
.page-scroll {
    width: 16px;
    padding: 153px 4px 0;
    border-right: 1px solid #e6e6e6;
}
.page-thumb {
    width: 8px;
    height: 68px;
    border-radius: 4px;
    background: #b8b8c0;
}

.watermark {
    position: absolute;
    left: 1036px;
    top: 607px;
}

/* taskbar */
.taskbar {
    position: absolute;
    left: 0;
    top: 680px;
    width: 1280px;
    height: 40px;
    display: flex;
    background: linear-gradient(#232323 22px, transparent 22px) 184px 0 / 1035px 40px no-repeat, linear-gradient(90deg, #001a24, #000c28);
}
.start {
    display: flex;
    justify-content: center;
    align-items: center;
    width: 48px;
}
.find {
    display: flex;
    align-items: center;
    width: 288px;
    height: 40px;
    padding-left: 12px;
    background: #f2f2f2;
    border: 1px solid #c4c4c4;
    border-left: none;
    font-size: 14px;
    color: #333;
}
.find span {
    width: 178px;
    margin-left: 10px;
    white-space: nowrap;
}
.lanterns { margin-left: -3px; }
.apps {
    display: flex;
}
.app {
    display: flex;
    justify-content: center;
    align-items: center;
    width: 48px;
    margin-right: 1px;
}
.view { margin-right: 3px; }
.active {
    background: #4c5052;
    border-bottom: 2px solid #76b9ed;
    padding-top: 2px;
}
.open {
    background: linear-gradient(#76b9ed, #76b9ed) 50% 100% / 40px 2px no-repeat;
}
.tray {
    display: flex;
    align-items: center;
    margin-left: auto;
    fill: none;
    stroke: #fff;
}
.cam { margin-left: 12px; }
.net { margin-left: 9px; }
.vol { margin-left: 7px; }
.clock {
    width: 70px;
    margin-left: -1px;
    color: #fff;
    font-size: 11.5px;
    line-height: 18px;
    text-align: center;
    letter-spacing: -0.3px;
}
.tray svg:first-child { margin-left: 0; }
.note-icon { margin: 2px 0 0 8px; }
.peek {
    width: 1px;
    height: 40px;
    margin: 0 4px 0 20px;
    background: #4a5568;
}
```
